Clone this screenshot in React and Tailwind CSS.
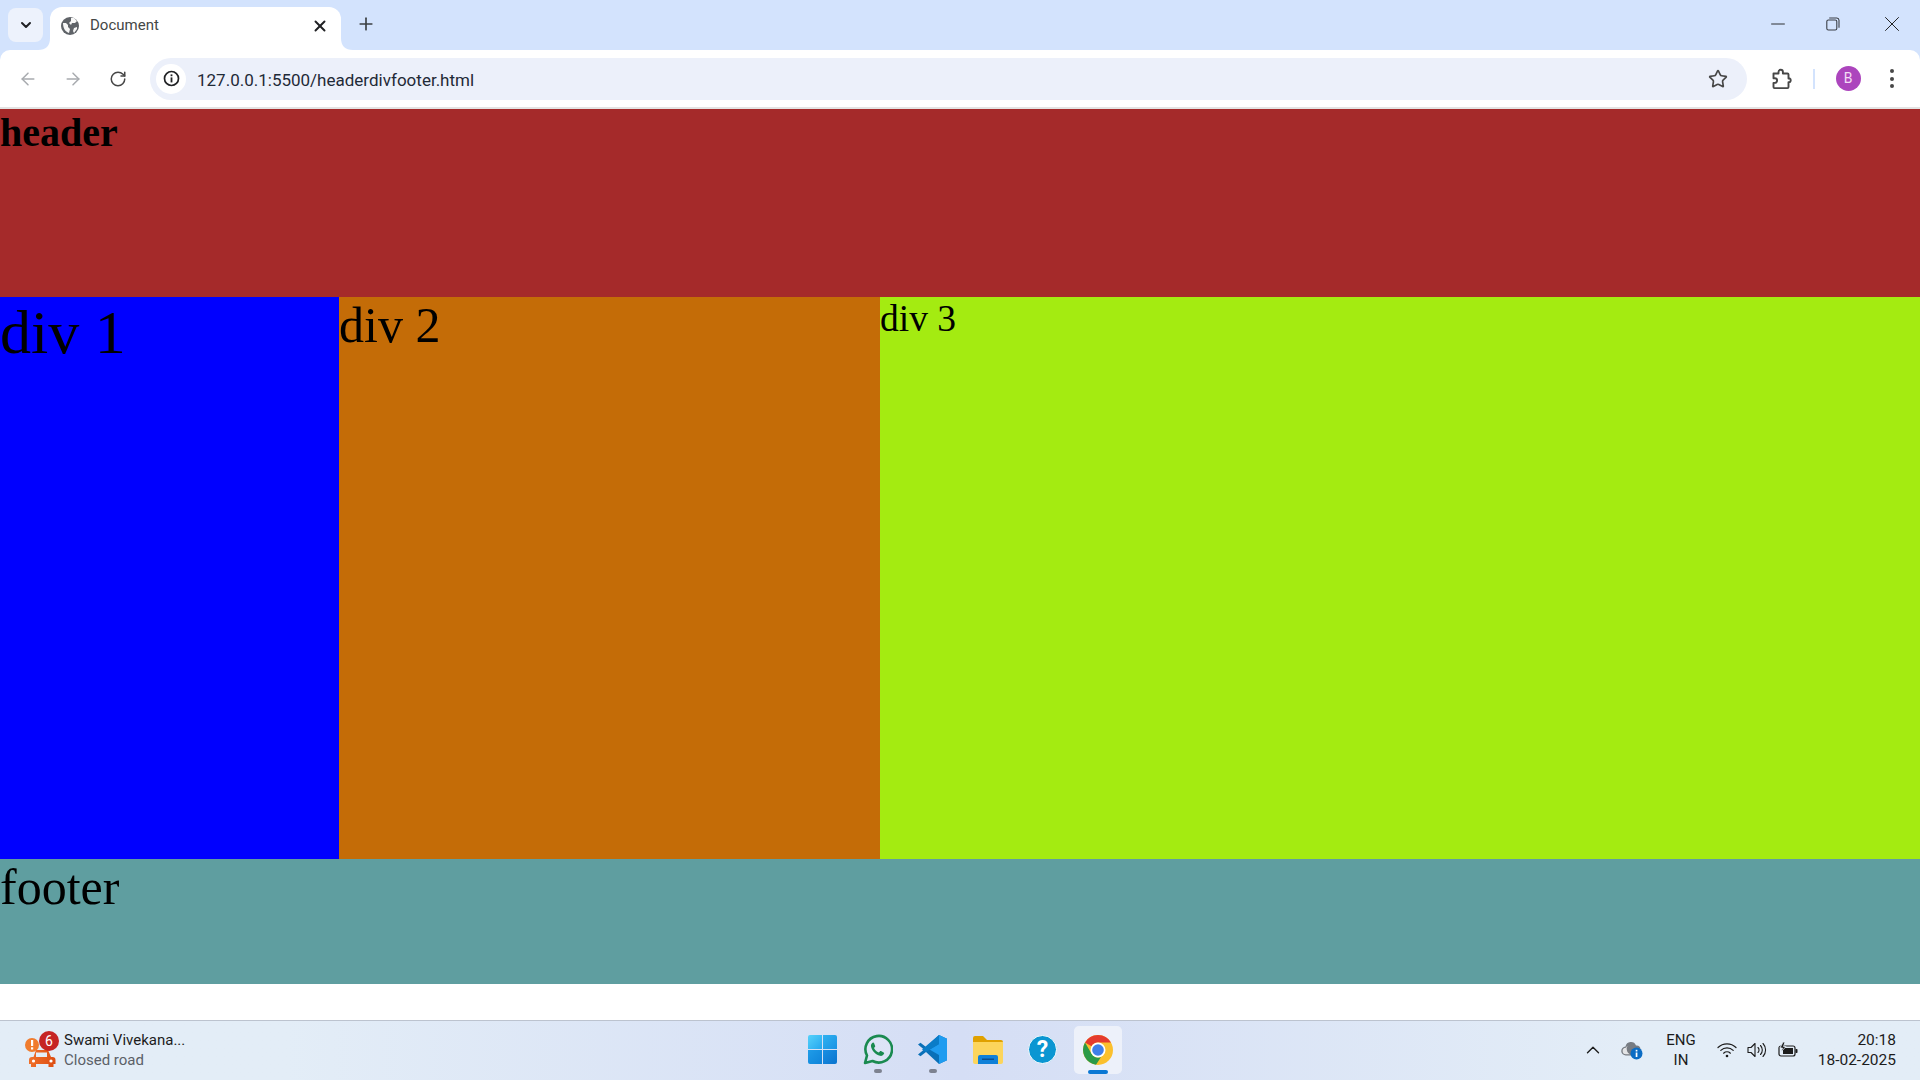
import React from 'react';
import { ArrowLeft, ArrowRight, RotateCw, ChevronDown, ChevronUp, Plus, X, Minus, Star } from 'lucide-react';

function TabFlare({ className, flip }) {
  return (
    <svg className={className} width="12" height="12" viewBox="0 0 12 12">
      <path d={flip ? 'M0 0C0 8 4 12 12 12H0Z' : 'M12 0C12 8 8 12 0 12H12Z'} fill="#ffffff" />
    </svg>
  );
}

function GlobeIcon() {
  return (
    <svg width="18" height="18" viewBox="0 0 18 18">
      <circle cx="9" cy="9" r="9" fill="#5f6368" />
      <path d="M2 6l3 0 2 2 0 2 2 2-1 4C5 15 2 12 2 6Z" fill="#fff" opacity="0.95" />
      <path d="M10 1l3 0 3 3-2 2-3 0-1 2-2-2 2-2Z" fill="#fff" opacity="0.95" />
      <path d="M13 11l3-1 0 2-3 4-1-2Z" fill="#fff" opacity="0.95" />
    </svg>
  );
}

function InfoIcon() {
  return (
    <svg width="17" height="17" viewBox="0 0 17 17" fill="none">
      <circle cx="8.500" cy="8.500" r="7" stroke="#202124" strokeWidth="1.700" />
      <rect x="7.600" y="7.400" width="1.800" height="5" fill="#202124" />
      <rect x="7.600" y="4.400" width="1.800" height="1.800" fill="#202124" />
    </svg>
  );
}

function RestoreIcon() {
  return (
    <svg width="14" height="14" viewBox="0 0 14 14" fill="none" stroke="#3b3f46" strokeWidth="1.100">
      <rect x="0.800" y="3" width="10" height="10" rx="1.600" />
      <path d="M3.200 1h7.600A2.400 2.400 0 0 1 13 3.200v7.600" />
    </svg>
  );
}

function PuzzleIcon() {
  return (
    <svg width="22" height="22" viewBox="0 0 22 22" fill="none" stroke="#474747" strokeWidth="1.900" strokeLinejoin="round">
      <path d="M2.500 5.500h5V4a2.200 2.200 0 0 1 4.400 0v1.500h4.600a1 1 0 0 1 1 1v4h1.300a2.200 2.200 0 0 1 0 3.600h-1.300v5a1 1 0 0 1-1 1H3.500a1 1 0 0 1-1-1v-4.200h1.300a2.300 2.300 0 0 0 0-4.600H2.500Z" />
    </svg>
  );
}

function TrafficIcon() {
  return (
    <div className="relative w-[32px] h-[38px] shrink-0">
      <svg className="absolute left-0 bottom-0" width="32" height="38" viewBox="0 0 32 38">
        <defs>
          <linearGradient id="car" x1="0" y1="0" x2="1" y2="0">
            <stop offset="0" stopColor="#f0702a" />
            <stop offset="1" stopColor="#dd4d12" />
          </linearGradient>
        </defs>
        <path d="M11 19h12l3 7h1.500a3 3 0 0 1 3 3v4h-2v3h-5v-3H11v3H6v-3H4v-4a3 3 0 0 1 3-3h1.500Z" fill="url(#car)" />
        <rect x="11" y="21.500" width="11" height="4.500" fill="#e3edf7" />
        <circle cx="8.500" cy="30" r="1.600" fill="#fff" />
        <circle cx="26" cy="30" r="1.600" fill="#fff" />
        <circle cx="7" cy="14" r="7" fill="#f07c2e" />
        <rect x="6" y="9" width="2.200" height="6" fill="#fff" />
        <rect x="6" y="16.300" width="2.200" height="2.200" fill="#fff" />
      </svg>
      <span className="absolute left-[14px] top-0 w-[20px] h-[20px] rounded-full bg-[#c62424] text-white text-[14px] leading-[20px] text-center">6</span>
    </div>
  );
}

function WindowsIcon() {
  return (
    <div className="grid grid-cols-2 gap-[1px] w-[29px] h-[29px]">
      <div className="bg-gradient-to-br from-[#55d1fb] to-[#22a7ee] rounded-tl-[2px]" />
      <div className="bg-gradient-to-br from-[#2fb1f0] to-[#1a93e4] rounded-tr-[2px]" />
      <div className="bg-gradient-to-br from-[#1f9ce8] to-[#0f84da] rounded-bl-[2px]" />
      <div className="bg-gradient-to-br from-[#1a8fe2] to-[#0a74cf] rounded-br-[2px]" />
    </div>
  );
}

function WhatsappIcon() {
  return (
    <svg width="31" height="32" viewBox="0 0 31 32" fill="none">
      <path d="M3 29l2-7.500A13.300 13.300 0 1 1 10.500 27Z" stroke="#1a8a50" strokeWidth="2.600" strokeLinejoin="round" fill="#fff" fillOpacity="0.15" />
      <path d="M11 8.500c-1.500.8-2.300 2.300-2 4 .8 4.300 4.500 8.200 9 9.300 1.800.4 3.400-.5 4-2 .3-.7.2-1.100-.4-1.400l-2.600-1.300c-.5-.2-.9-.1-1.200.3l-1 1.200c-2.200-.8-3.800-2.400-4.800-4.600l.9-1c.4-.4.4-.8.200-1.300l-1.100-2.600c-.2-.6-.6-.8-1-.6Z" fill="#1a8a50" />
    </svg>
  );
}

function VscodeIcon() {
  return (
    <svg width="31" height="31" viewBox="0 0 31 31">
      <path d="M22 1l8 3.800v21.400L22 30 9 18l-5.500 4.200L1 20.500 7 15.500 1 10.500 3.500 8.800 9 13Z" fill="#0a70b8" />
      <path d="M22 1l8 3.800v21.400L22 30V21L12.500 15.500 22 10Z" fill="#1f9cf0" />
      <path d="M22 1v8.900L9 18 5 15.500Z" fill="#0a7cc8" />
    </svg>
  );
}

function FolderIcon() {
  return (
    <svg width="30" height="28" viewBox="0 0 30 28">
      <path d="M0 2a2 2 0 0 1 2-2h8l4 4h14a2 2 0 0 1 2 2v4H0Z" fill="#e0a100" />
      <path d="M0 6h30v20a2 2 0 0 1-2 2H2a2 2 0 0 1-2-2Z" fill="#fcd55c" />
      <path d="M5 21a2 2 0 0 1 2-2h16a2 2 0 0 1 2 2v7H5Z" fill="#0f80d8" />
      <rect x="9" y="22.500" width="12" height="1.500" fill="#0a4f8f" />
    </svg>
  );
}

function ChromeIcon() {
  return (
    <svg width="30" height="30" viewBox="0 0 30 30">
      <circle cx="15" cy="15" r="15" fill="#fbc02d" />
      <path d="M15 0a15 15 0 0 1 13 7.500H15a7.500 7.500 0 0 0-6.500 3.750L2 7.500A15 15 0 0 1 15 0Z" fill="#e53b2e" />
      <path d="M2 7.500l6.500 11.250A7.500 7.500 0 0 0 18 22l-5 7.800A15 15 0 0 1 2 7.500Z" fill="#2b9a48" />
      <circle cx="15" cy="15" r="7.500" fill="#fff" />
      <circle cx="15" cy="15" r="5.800" fill="#3f7fe8" />
    </svg>
  );
}

function CloudInfoIcon() {
  return (
    <svg width="22" height="20" viewBox="0 0 22 20">
      <path d="M5 15.500a4.500 4.500 0 0 1-.5-9 5.500 5.500 0 0 1 10.500-1 4 4 0 0 1 1 8H14l-2 2Z" fill="#767b82" />
      <path d="M5 14.300a3.300 3.300 0 0 1-.2-6.600 4.500 4.500 0 0 1 3-2.500 4 4 0 0 0-2 4.500c.2 2 1.500 3.500 3.200 4.600Z" fill="#fff" opacity="0.8" />
      <circle cx="15.500" cy="13.500" r="6" fill="#0b6cc4" />
      <rect x="14.700" y="12.500" width="1.700" height="4.500" fill="#fff" />
      <rect x="14.700" y="9.800" width="1.700" height="1.700" fill="#fff" />
    </svg>
  );
}

function WifiIcon() {
  return (
    <svg width="20" height="16" viewBox="0 0 20 16" fill="none" stroke="#1c1c1c" strokeWidth="1.200" strokeLinecap="round">
      <path d="M1 5.500a13 13 0 0 1 18 0" />
      <path d="M3.800 8.400a9 9 0 0 1 12.400 0" />
      <path d="M6.600 11.200a5 5 0 0 1 6.800 0" />
      <circle cx="10" cy="14" r="1.300" fill="#1c1c1c" stroke="none" />
    </svg>
  );
}

function VolumeIcon() {
  return (
    <svg width="20" height="16" viewBox="0 0 20 16" fill="none" stroke="#1c1c1c" strokeWidth="1.100" strokeLinejoin="round" strokeLinecap="round">
      <path d="M1 5.500h3l4-4v13l-4-4H1Z" />
      <path d="M11 5.500a3.500 3.500 0 0 1 0 5" />
      <path d="M13.500 3.500a6.500 6.500 0 0 1 0 9" />
      <path d="M16 1.500a9.500 9.500 0 0 1 0 13" />
    </svg>
  );
}

function BatteryIcon() {
  return (
    <svg width="20" height="16" viewBox="0 0 20 16">
      <rect x="1" y="4" width="16" height="10" rx="2" fill="none" stroke="#1c1c1c" strokeWidth="1.200" />
      <rect x="5" y="6" width="10" height="6" fill="#1c1c1c" />
      <rect x="17.500" y="7" width="2" height="4" rx="0.800" fill="#1c1c1c" />
      <path d="M5 0L2 6h2.500L3 10l5-5.500H5.500L7 0Z" fill="#1c1c1c" stroke="#e3edf7" strokeWidth="0.800" />
    </svg>
  );
}

function TabStrip() {
  return (
    <div className="h-[50px] bg-[#d3e3fd] flex items-start pl-2 shrink-0">
      <div className="w-[35px] h-[34px] mt-2 rounded-lg bg-[#edf2fc] flex items-center justify-center">
        <ChevronDown size={16} strokeWidth={3} color="#202124" />
      </div>
      <div className="relative w-[291px] h-[43px] mt-[7px] ml-[7px] pb-[6px] bg-white rounded-t-xl flex items-center pl-[11px] pr-[12px]">
        <TabFlare className="absolute -left-[12px] bottom-0" />
        <TabFlare className="absolute -right-[12px] bottom-0" flip />
        <GlobeIcon />
        <span className="ml-[11px] flex-1 text-[15px] text-[#444746]">Document</span>
        <X size={18} strokeWidth={2.600} color="#202124" />
      </div>
      <div className="ml-[10px] w-[30px] h-[34px] mt-[7px] flex items-center justify-center">
        <Plus size={20} strokeWidth={2} color="#3c4043" />
      </div>
      <div className="ml-auto flex h-[48px] items-center">
        <div className="w-[56px] flex justify-center"><Minus size={22} strokeWidth={1} color="#1f1f1f" /></div>
        <div className="w-[54px] flex justify-center"><RestoreIcon /></div>
        <div className="w-[57px] ml-[3px] flex justify-center"><X size={26} strokeWidth={0.900} color="#1f1f1f" /></div>
      </div>
    </div>
  );
}

function Toolbar() {
  return (
    <div className="bg-[#d3e3fd] shrink-0">
      <div className="h-[59px] bg-white rounded-t-[10px] border-b-2 border-[#e3e3e3] flex items-center pl-[5px]">
        <div className="w-[45px] flex justify-center"><ArrowLeft size={20} strokeWidth={1.800} color="#a8abaf" /></div>
        <div className="w-[45px] flex justify-center"><ArrowRight size={20} strokeWidth={1.800} color="#a8abaf" /></div>
        <div className="w-[45px] flex justify-center"><RotateCw size={18} strokeWidth={2} color="#474747" /></div>
        <div className="ml-[10px] flex-1 h-[42px] rounded-full bg-[#ecf0fa] flex items-center pl-[6px] pr-[19px]">
          <div className="w-[30px] h-[30px] rounded-full bg-white flex items-center justify-center"><InfoIcon /></div>
          <span className="ml-[11px] flex-1 text-[17px] leading-[42px] pt-[2px] text-[#1f2a37]">127.0.0.1:5500/headerdivfooter.html</span>
          <Star size={20} strokeWidth={2} color="#474747" />
        </div>
        <div className="w-[66px] pl-[3px] flex justify-center"><PuzzleIcon /></div>
        <div className="w-[2px] h-[20px] bg-[#d3e3fd]" />
        <div className="w-[66px] flex justify-center">
          <div className="w-[25px] h-[25px] rounded-full bg-[#ac45bd] text-[#f3dcf5] text-[14px] leading-[25px] text-center">B</div>
        </div>
        <div className="w-[20px] pl-[2px] flex flex-col items-center gap-[3.500px]">
          <span className="w-[4px] h-[4px] rounded-full bg-[#474747]" />
          <span className="w-[4px] h-[4px] rounded-full bg-[#474747]" />
          <span className="w-[4px] h-[4px] rounded-full bg-[#474747]" />
        </div>
        <div className="w-[19px]" />
      </div>
    </div>
  );
}

function PageContent() {
  return (
    <div className="flex-1 flex flex-col bg-white text-black leading-[1.15] font-['Liberation_Serif',serif]">
      <header className="h-[188px] pt-[1px] bg-[#a52a2a]">
        <h1 className="text-[40px] font-bold leading-[1.15]">header</h1>
      </header>
      <div className="h-[562px] flex">
        <div className="w-[339px] bg-[#0000ff] text-[62px]">div 1</div>
        <div className="w-[541px] bg-[#c46c07] text-[50px]">div 2</div>
        <div className="flex-1 bg-[#a4eb11] text-[37.500px]">div 3</div>
      </div>
      <footer className="h-[125px] bg-[#5f9ea0] text-[50px]">footer</footer>
    </div>
  );
}

function TaskIcon({ children, active, running }) {
  return (
    <div className={`relative w-[48px] h-[48px] mx-[3.500px] rounded-[5px] flex items-center justify-center ${active ? 'bg-[#edf1fa]' : ''}`}>
      {children}
      {running && <span className="absolute bottom-[1px] left-[20px] w-[8px] h-[3.500px] rounded-full bg-[#7d8290]" />}
      {active && <span className="absolute bottom-[0px] left-[14px] w-[20px] h-[4px] rounded-full bg-[#0a78d4]" />}
    </div>
  );
}

function Taskbar() {
  return (
    <div className="h-[60px] shrink-0 pb-[2px] border-t border-[#bcc3cf] bg-gradient-to-r from-[#e3edf7] from-15% via-[#d5def5] to-[#e3edf7] to-85% grid grid-cols-[1fr_auto_1fr] items-center text-[#1c1c1c] font-['Roboto',sans-serif]">
      <div className="flex items-center pl-[25px]">
        <TrafficIcon />
        <div className="ml-[7px] flex flex-col text-[15px] leading-[20px]">
          <span>Swami Vivekana...</span>
          <span className="text-[#5b6067]">Closed road</span>
        </div>
      </div>
      <div className="flex items-center">
        <TaskIcon><WindowsIcon /></TaskIcon>
        <TaskIcon running><WhatsappIcon /></TaskIcon>
        <TaskIcon running><VscodeIcon /></TaskIcon>
        <TaskIcon><FolderIcon /></TaskIcon>
        <TaskIcon>
          <div className="w-[29px] h-[29px] rounded-full bg-[#0b96d2] border border-white text-white text-[23px] font-bold leading-[27px] text-center">?</div>
        </TaskIcon>
        <TaskIcon active><ChromeIcon /></TaskIcon>
      </div>
      <div className="flex items-center justify-end pr-[24px]">
        <div className="w-[40px] flex justify-center"><ChevronUp size={22} strokeWidth={1.500} /></div>
        <div className="w-[38px] flex justify-center"><CloudInfoIcon /></div>
        <div className="w-[60px] text-center text-[15px] leading-[20px]">
          <div>ENG</div>
          <div>IN</div>
        </div>
        <div className="w-[32px] flex justify-center"><WifiIcon /></div>
        <div className="w-[28px] flex justify-center"><VolumeIcon /></div>
        <div className="w-[34px] flex justify-center"><BatteryIcon /></div>
        <div className="w-[91px] text-right text-[15.500px] leading-[20px]">
          <div>20:18</div>
          <div>18-02-2025</div>
        </div>
      </div>
    </div>
  );
}

export default function App() {
  return (
    <div className="h-screen w-full flex flex-col overflow-hidden font-['Roboto',sans-serif]">
      <TabStrip />
      <Toolbar />
      <PageContent />
      <Taskbar />
    </div>
  );
}
